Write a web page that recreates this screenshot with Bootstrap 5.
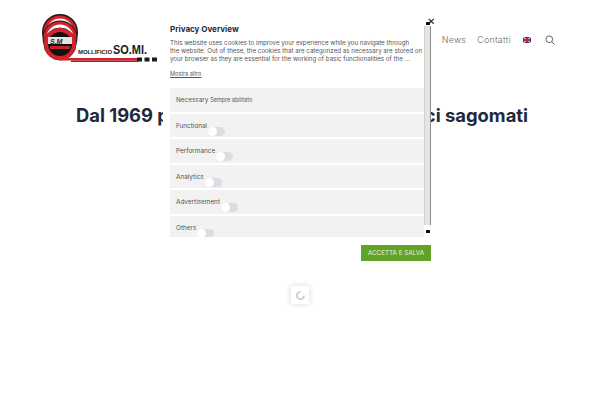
<!DOCTYPE html>
<html lang="it">
<head>
    <meta charset="UTF-8">
    <meta name="viewport" content="width=device-width, initial-scale=1.0">
    <title>Mollificio SO.MI.</title>
    <link href="https://cdn.jsdelivr.net/npm/bootstrap@5.3.2/dist/css/bootstrap.min.css" rel="stylesheet">
    <style>
        html, body { height: 100%; overflow: hidden; }
        body { background: #fff; font-family: Inter, "Liberation Sans", sans-serif; }
        .site-head { height: 70px; padding: 13px 45px 0 41px; }
        .site-menu { font-size: 8.8px; font-weight: 300; letter-spacing: .3px; margin-top: 20px; }
        .site-menu a { color: #666; text-decoration: none; margin-right: 11px; }
        .site-menu a + a { margin-right: 12px; }
        .menu-search { margin-left: 14px; }
        .logo-text { font-family: "Liberation Sans", sans-serif; font-weight: 700; fill: #1a1a1a; }
        .hero-title { margin: 33px 0 0; padding-left: 4px; font-size: 18.4px; line-height: 24px; font-weight: 700; color: #1f2a3c; text-align: center; }

        .cookie-box { position: absolute; left: 163px; top: 15px; width: 268px; height: 247px; background: #fff; }
        .cookie-close { position: absolute; right: -4px; top: 1px; font-size: 10px; line-height: 11px; color: #111; z-index: 2; }
        .cookie-main { height: 217px; margin: 5px 0 0 7px; }
        .cookie-scroll { overflow: hidden; }
        .fake-bar { width: 7px; background: #fff; }
        .fake-arrow { height: 6px; background: linear-gradient(#111, #111) center / 4px 3px no-repeat; }
        .fake-arrow-end { height: 12px; }
        .fake-thumb { background: #e6e4de; border-left: 1px solid #d0d0cc; border-right: 1px solid #8a8a8a; }
        .cookie-title { font-size: 8px; font-weight: 700; color: #1f2a3c; line-height: 10px; margin: 4px 0 5px; }
        .cookie-text { font-size: 6.2px; line-height: 8px; color: #555; margin: 0 0 7px; white-space: nowrap; }
        .cookie-more { font-size: 5.5px; line-height: 8px; color: #555; text-decoration: underline; margin-bottom: 10px; }
        .cookie-row { height: 23.6px; margin-bottom: 2px; background: #f2f2f2; padding: 8px 6px 0; font-size: 6.4px; line-height: 8px; color: #555; }
        .row-note { font-size: 5.5px; }
        .row-switch { width: 17px; height: 9px; margin: 5px 0 0 1px; border-radius: 5px; background: #dcdce4; position: relative; }
        .row-switch::before { content: ""; position: absolute; left: 0; top: 0; width: 9px; height: 9px; border-radius: 50%; background: #fff; }
        .cookie-save { height: 16px; margin-top: 8px; padding: 0 7px; border: 0; border-radius: 0; background: #61a229; color: #e8f4da; font-size: 6.3px; line-height: 16px; }

        .page-loader { position: absolute; left: 291px; top: 286px; width: 18px; height: 18px; background: #fff; box-shadow: 0 0 6px rgba(0,0,0,.16); }
    </style>
</head>

<body>
    <header class="site-head d-flex justify-content-between align-items-start">
        <svg width="118" height="52" viewBox="0 0 118 52">
            <!-- rings -->
            <circle cx="19" cy="19" r="16.5" fill="#fff" stroke="#1a1a1a" stroke-width="3"/>
            <circle cx="19" cy="19" r="15" fill="#fff" stroke="#d4222c" stroke-width="3"/>
            <circle cx="19" cy="25" r="16" fill="#fff" stroke="#1a1a1a" stroke-width="3"/>
            <circle cx="19" cy="25" r="15" fill="#fff" stroke="#d4222c" stroke-width="3"/>
            <circle cx="19" cy="31" r="16" fill="#fff" stroke="#1a1a1a" stroke-width="1"/>
            <circle cx="19" cy="31" r="14" fill="#111" stroke="#d4222c" stroke-width="4"/>
            <rect x="7" y="24" width="24" height="7" fill="#e4e4e4"/>
            <rect x="9" y="33" width="20" height="3" fill="#c8202a"/>
            <text x="9" y="30.5" class="logo-text" font-size="7" font-style="italic">S.M</text>
            <!-- tail -->
            <rect x="19" y="45" width="78" height="2.5" fill="#d4222c"/>
            <rect x="30" y="47.5" width="67" height="1.5" fill="#a81b22"/>
            <rect x="96" y="44.5" width="5" height="4" fill="#1a1a1a"/>
            <rect x="103.500" y="44.5" width="5" height="4" fill="#1a1a1a"/>
            <rect x="111" y="44.5" width="5" height="4" fill="#1a1a1a"/>
            <text x="37" y="41" class="logo-text" font-size="6" textLength="34" lengthAdjust="spacingAndGlyphs">MOLLIFICIO</text>
            <text x="72" y="41" class="logo-text" font-size="12.5" textLength="34" lengthAdjust="spacingAndGlyphs">SO.MI.</text>
        </svg>
        <nav class="site-menu d-flex align-items-center">
            <a href="#">News</a>
            <a href="#">Contatti</a>
            <svg width="8" height="6" viewBox="0 0 8 6"><rect width="8" height="6" fill="#3b3f7c"/><path d="M0 0l8 6M8 0L0 6" stroke="#fff" stroke-width="1"/><path d="M4 0v6M0 3h8" stroke="#c4213a" stroke-width="1.6"/></svg>
            <svg class="menu-search" width="10" height="10" viewBox="0 0 11 11" fill="none" stroke="#555" stroke-width="1"><circle cx="4.7" cy="4.7" r="3.7"/><path d="M7.4 7.4L10.5 10.5"/></svg>
        </nav>
    </header>

    <h1 class="hero-title">Dal 1969 produciamo molle e fili metallici sagomati</h1>

    <div class="cookie-box">
        <span class="cookie-close">✕</span>
        <div class="cookie-main d-flex">
            <div class="cookie-scroll flex-grow-1">
                <div class="cookie-title">Privacy Overview</div>
                <p class="cookie-text">This website uses cookies to improve your experience while you navigate through<br>the website. Out of these, the cookies that are categorized as necessary are stored on<br>your browser as they are essential for the working of basic functionalities of the ...</p>
                <div class="cookie-more">Mostra altro</div>
                <div class="cookie-row">Necessary <span class="row-note">Sempre abilitato</span></div>
                <div class="cookie-row d-flex align-items-start"><span>Functional</span><span class="row-switch"></span></div>
                <div class="cookie-row d-flex align-items-start"><span>Performance</span><span class="row-switch"></span></div>
                <div class="cookie-row d-flex align-items-start"><span>Analytics</span><span class="row-switch"></span></div>
                <div class="cookie-row d-flex align-items-start"><span>Advertisement</span><span class="row-switch"></span></div>
                <div class="cookie-row d-flex align-items-start"><span>Others</span><span class="row-switch"></span></div>
            </div>
            <div class="fake-bar d-flex flex-column flex-shrink-0">
                <div class="fake-arrow"></div>
                <div class="fake-thumb flex-grow-1"></div>
                <div class="fake-arrow fake-arrow-end"></div>
            </div>
        </div>
        <div class="d-flex justify-content-end">
            <button type="button" class="btn cookie-save">ACCETTA E SALVA</button>
        </div>
    </div>

    <div class="page-loader d-flex align-items-center justify-content-center">
        <svg width="9" height="9" viewBox="0 0 10 10" fill="none" stroke="#bbb" stroke-width="1.6"><path d="M5 1A4 4 0 1 0 9 5"/></svg>
    </div>
    <script src="https://cdn.jsdelivr.net/npm/bootstrap@5.3.2/dist/js/bootstrap.bundle.min.js"></script>
</body>

</html>
